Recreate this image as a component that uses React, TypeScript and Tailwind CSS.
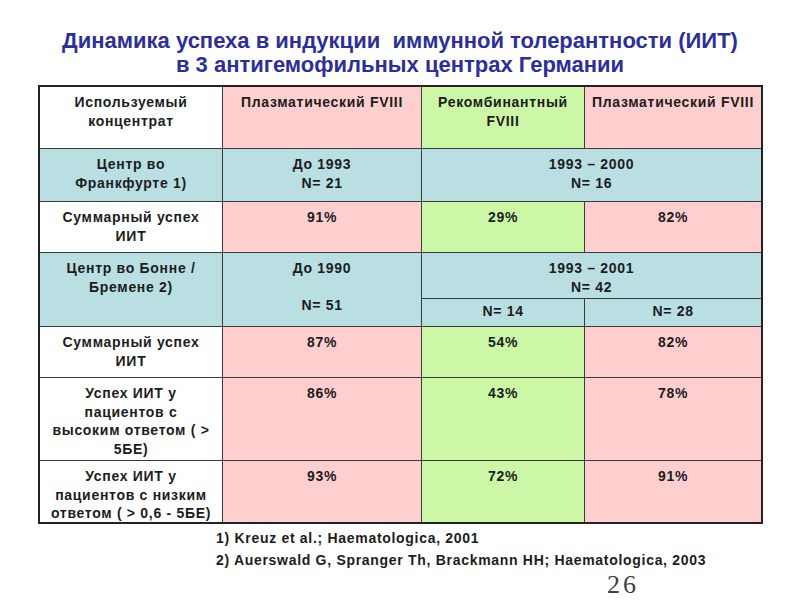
import React from "react";

const P = "bg-[#ffcfcf]";
const G = "bg-[#ccf7a7]";
const B = "bg-[#b9dfe3]";
const W = "bg-white";

function Cell({ bg, className = "", children }: { bg: string; className?: string; children: React.ReactNode }) {
  return (
    <div className={`${bg} ${className} text-center pt-[6px] px-0 text-[14px] tracking-[0.7px] leading-[18.5px] font-bold text-[#1c1c1c]`}>
      {children}
    </div>
  );
}

export default function App() {
  return (
    <div className="w-[800px] h-[600px] bg-white relative overflow-hidden" style={{ fontFamily: '"Liberation Sans", Arial, sans-serif' }}>
      <div className="pt-[29px] text-center text-[22px] leading-[24px] font-bold text-[#2d2f98]">
        <div>Динамика успеха в индукции&nbsp; иммунной толерантности (ИИТ)</div>
        <div>в 3 антигемофильных центрах Германии</div>
      </div>
      <div className="ml-[38px] mt-[8px] w-[725px] border-2 border-[#222] bg-[#3a3a3a] grid gap-px grid-cols-[182px_198px_162px_176px] grid-rows-[61px_52px_50px_45px_27px_50px_82px_61px]">
        <Cell bg={W}>Используемый<br />концентрат</Cell>
        <Cell bg={P}>Плазматический FVIII</Cell>
        <Cell bg={G}>Рекомбинантный<br />FVIII</Cell>
        <Cell bg={P}>Плазматический FVIII</Cell>

        <Cell bg={B}>Центр во<br />Франкфурте 1)</Cell>
        <Cell bg={B}>До 1993<br />N= 21</Cell>
        <Cell bg={B} className="col-span-2">1993 – 2000<br />N= 16</Cell>

        <Cell bg={W}>Суммарный успех<br />ИИТ</Cell>
        <Cell bg={P}>91%</Cell>
        <Cell bg={G}>29%</Cell>
        <Cell bg={P}>82%</Cell>

        <Cell bg={B} className="row-span-2">Центр во Бонне /<br />Бремене 2)</Cell>
        <Cell bg={B} className="row-span-2">До 1990<br /><br />N= 51</Cell>
        <Cell bg={B} className="col-span-2">1993 – 2001<br />N= 42</Cell>
        <Cell bg={B} className="!pt-[3px]">N= 14</Cell>
        <Cell bg={B} className="!pt-[3px]">N= 28</Cell>

        <Cell bg={W}>Суммарный успех<br />ИИТ</Cell>
        <Cell bg={P}>87%</Cell>
        <Cell bg={G}>54%</Cell>
        <Cell bg={P}>82%</Cell>

        <Cell bg={W}>Успех ИИТ у<br />пациентов с<br />высоким ответом ( &gt;<br />5БЕ)</Cell>
        <Cell bg={P}>86%</Cell>
        <Cell bg={G}>43%</Cell>
        <Cell bg={P}>78%</Cell>

        <Cell bg={W}>Успех ИИТ у<br />пациентов с низким<br />ответом ( &gt; 0,6 - 5БЕ)</Cell>
        <Cell bg={P}>93%</Cell>
        <Cell bg={G}>72%</Cell>
        <Cell bg={P}>91%</Cell>
      </div>
      <div className="ml-[216px] mt-[5px] flex flex-col gap-[3px] text-[14px] tracking-[0.7px] leading-[19px] font-bold text-[#1c1c1c]">
        <div>1) Kreuz et al.; Haematologica, 2001</div>
        <div>2) Auerswald G, Spranger Th, Brackmann HH; Haematologica, 2003</div>
      </div>
      <div className="absolute left-[607px] top-[577px] text-[26px] leading-[16px] tracking-[3px] text-[#404040]" style={{ fontFamily: '"Liberation Serif", "Times New Roman", serif' }}>26</div>
    </div>
  );
}
